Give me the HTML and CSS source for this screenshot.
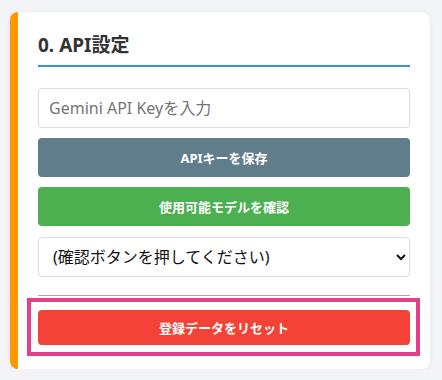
FILE: index.html
```html
<!DOCTYPE html>
<html lang="ja">
<head>
  <meta charset="UTF-8">
  <meta name="viewport" content="width=device-width, initial-scale=1.0">
  <title>API設定</title>
  <link rel="stylesheet" href="styles.css">
</head>
<body>
  <div class="card">
    <h2>0. API設定</h2>
    <input type="text" id="apiKeyInput" placeholder="Gemini API Keyを入力">
    <button class="btn btn-save">APIキーを保存</button>
    <button class="btn btn-check">使用可能モデルを確認</button>
    <select id="modelSelect">
      <option>(確認ボタンを押してください)</option>
    </select>
    <hr>
    <div class="reset-area">
      <button class="btn btn-reset">登録データをリセット</button>
    </div>
  </div>
</body>
</html>
```

FILE: styles.css
```css
body {
  font-family: "Noto Sans", "Noto Sans CJK JP", sans-serif;
  background: #f3f4f7;
  margin: 0;
  padding: 12px 12px 0 10px;
  color: #333;
}

.card {
  background: white;
  border-left: 8px solid #ff9800;
  border-radius: 8px;
  box-shadow: 0 1px 4px rgba(0,0,0,0.08);
  padding: 20px 20px 13px 20px;
  width: 420px;
  box-sizing: border-box;
  display: flex;
  flex-direction: column;
}

h2 {
  font-size: 19px;
  font-weight: bold;
  margin: 0 0 21px 0;
  padding-bottom: 6px;
  border-bottom: 2px solid #3a94d0;
  line-height: 27px;
}

input[type="text"] {
  height: 40px;
  padding: 0 10px;
  border: 1px solid #ddd;
  border-radius: 4px;
  font-family: inherit;
  font-size: 16px;
  box-sizing: border-box;
  margin-bottom: 10px;
}

input::placeholder {
  color: #757575;
}

.btn {
  border: none;
  border-radius: 4px;
  color: white;
  font-family: inherit;
  font-size: 13px;
  font-weight: bold;
  height: 39px;
  margin-bottom: 10px;
  cursor: pointer;
}

.btn-save {
  background: #607d8b;
}

.btn-check {
  background: #4caf50;
  margin-bottom: 11px;
}

select {
  height: 40px;
  padding: 0 10px;
  border: 1px solid #ddd;
  border-radius: 4px;
  background: white;
  font-family: inherit;
  font-size: 16px;
  color: #111;
}

hr {
  border: none;
  border-top: 1px solid #aaa;
  margin: 18px 0 2px 0;
  width: 100%;
}

.reset-area {
  border: 4px solid #e2408a;
  margin: 0 -10px 0 -11px;
  padding: 8px 6px 7px 7px;
}

.btn-reset {
  background: #f44336;
  height: 35px;
  width: 100%;
  margin-bottom: 0;
}
```
